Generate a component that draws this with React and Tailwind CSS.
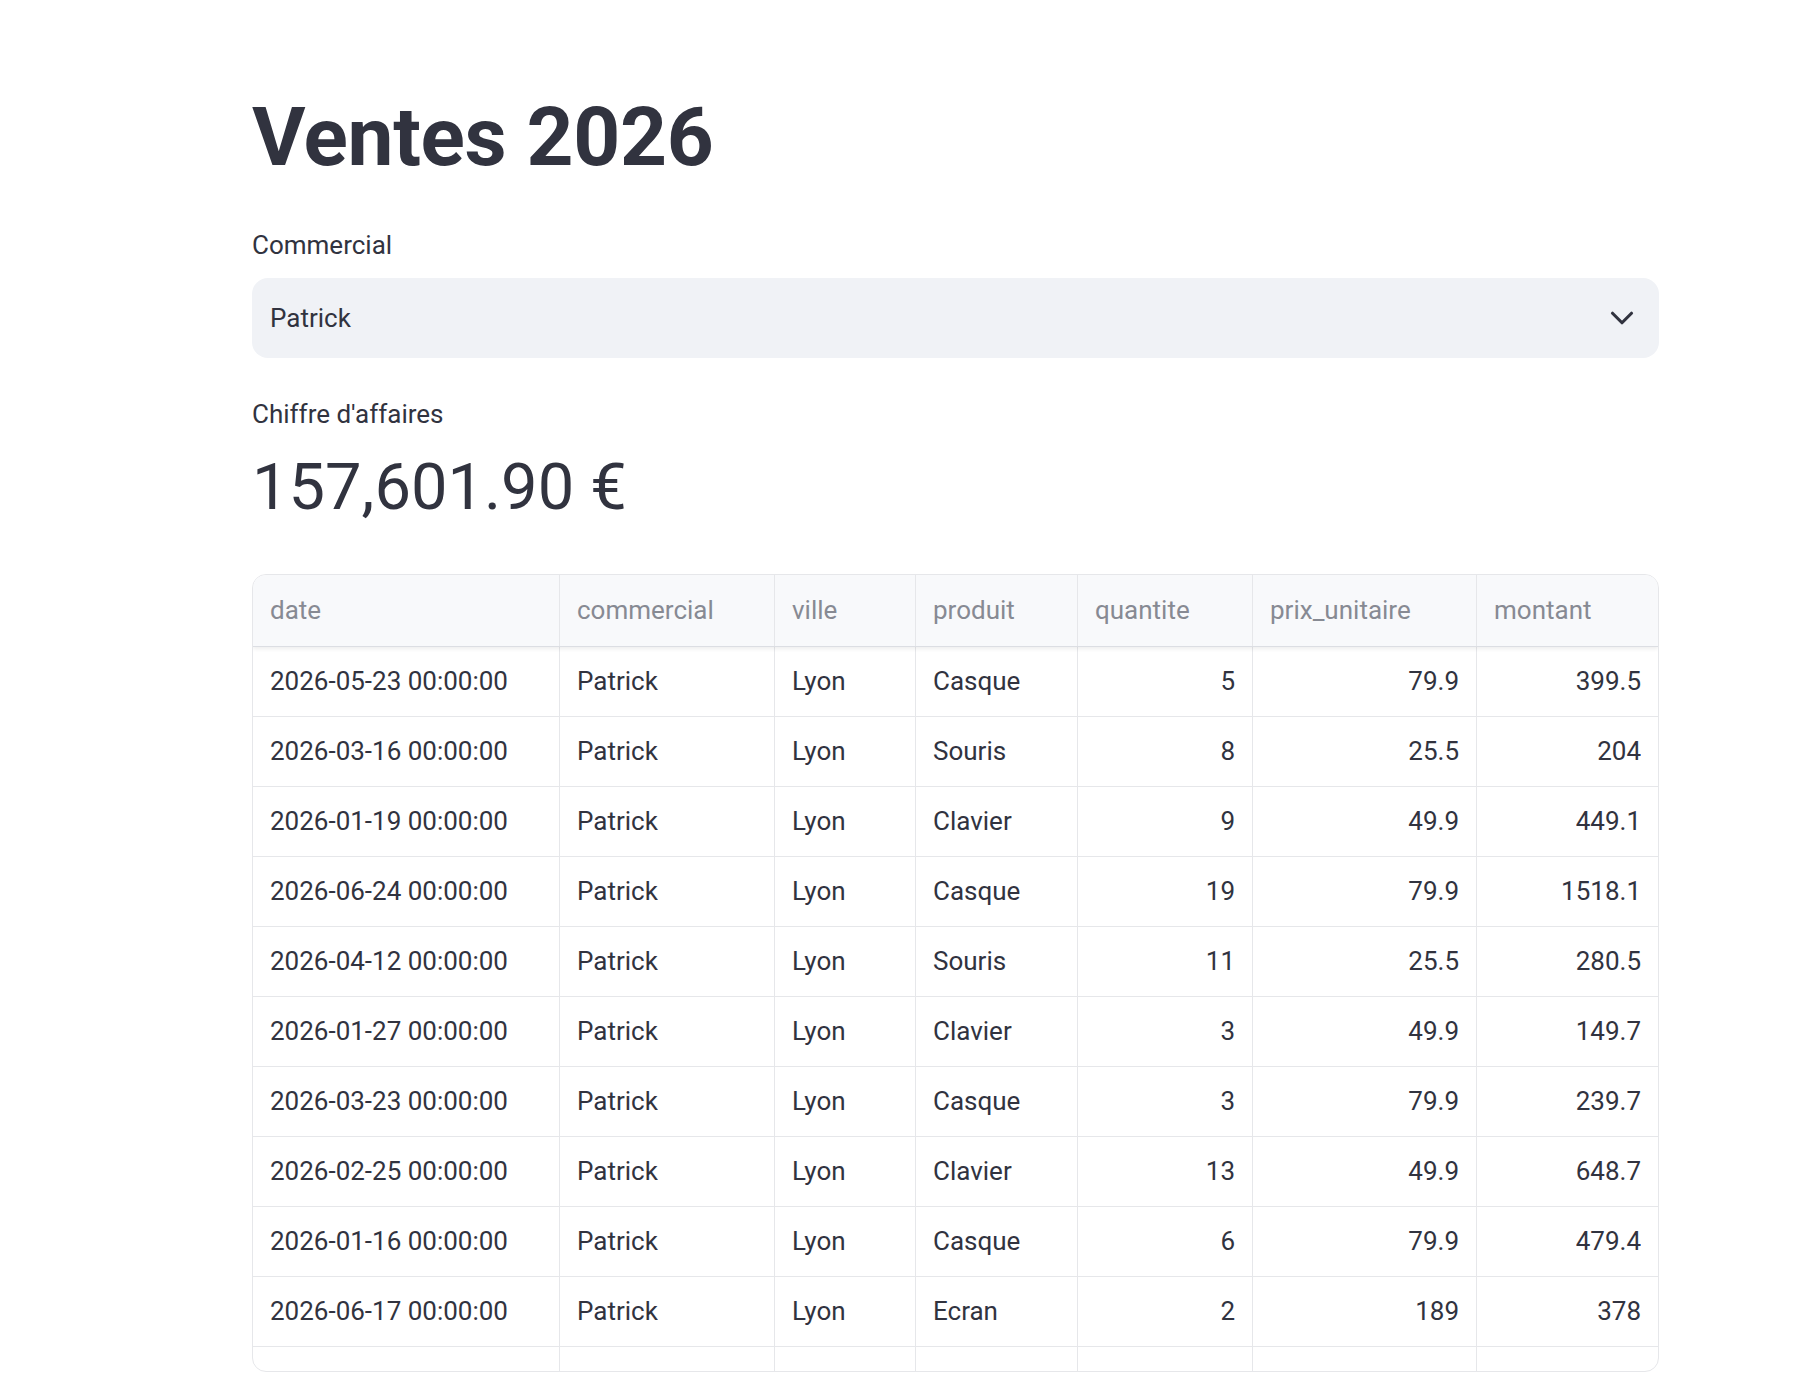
import React from "react";
import { ChevronDown } from "lucide-react";

const columns = [
  { key: "date", label: "date", width: "w-[307px]" },
  { key: "commercial", label: "commercial", width: "w-[215px]" },
  { key: "ville", label: "ville", width: "w-[141px]" },
  { key: "produit", label: "produit", width: "w-[162px]" },
  { key: "quantite", label: "quantite", width: "w-[175px]", num: true },
  { key: "prix", label: "prix_unitaire", width: "w-[224px]", num: true },
  { key: "montant", label: "montant", width: "w-[181px]", num: true },
];

const rows = [
  ["2026-05-23 00:00:00", "Patrick", "Lyon", "Casque", "5", "79.9", "399.5"],
  ["2026-03-16 00:00:00", "Patrick", "Lyon", "Souris", "8", "25.5", "204"],
  ["2026-01-19 00:00:00", "Patrick", "Lyon", "Clavier", "9", "49.9", "449.1"],
  ["2026-06-24 00:00:00", "Patrick", "Lyon", "Casque", "19", "79.9", "1518.1"],
  ["2026-04-12 00:00:00", "Patrick", "Lyon", "Souris", "11", "25.5", "280.5"],
  ["2026-01-27 00:00:00", "Patrick", "Lyon", "Clavier", "3", "49.9", "149.7"],
  ["2026-03-23 00:00:00", "Patrick", "Lyon", "Casque", "3", "79.9", "239.7"],
  ["2026-02-25 00:00:00", "Patrick", "Lyon", "Clavier", "13", "49.9", "648.7"],
  ["2026-01-16 00:00:00", "Patrick", "Lyon", "Casque", "6", "79.9", "479.4"],
  ["2026-06-17 00:00:00", "Patrick", "Lyon", "Ecran", "2", "189", "378"],
  ["", "Patrick", "Lyon", "Ecran", "", "", ""],
];

const Cell = ({ col, last, children, header }) => (
  <div
    className={`${col.width} shrink-0 flex items-center px-[17px] ${
      col.num && !header ? "justify-end" : "justify-start"
    } ${last ? "" : "border-r border-[#e6e7ea]"}`}
  >
    <span className="truncate">{children}</span>
  </div>
);

const App = () => {
  return (
    <div className="min-h-screen bg-white font-['Roboto','Liberation_Sans',sans-serif] text-[#31333f]">
      <div className="ml-[252px] w-[1407px] pt-[96px]">
        <h1 className="text-[82px] leading-none font-bold tracking-[-0.3px]">
          Ventes 2026
        </h1>

        <label className="block mt-[48px] text-[26px] leading-[39px]">
          Commercial
        </label>
        <div className="mt-[13px] h-[80px] rounded-[16px] bg-[#f0f2f6] flex items-center justify-between pl-[18px] pr-[18px]">
          <span className="text-[26px]">Patrick</span>
          <ChevronDown size={38} strokeWidth={2} className="text-[#31333f]" />
        </div>

        <div className="mt-[37px] text-[26px] leading-[39px]">
          Chiffre d'affaires
        </div>
        <div className="mt-[21px] text-[65px] leading-none">157,601.90 €</div>

        {/* data grid, clipped after the tenth row */}
        <div className="mt-[54px] h-[798px] rounded-[14px] border border-[#e6e7ea] overflow-hidden text-[26px]">
          <div className="relative z-10 flex h-[72px] bg-[#f8f9fb] text-[#878a93] border-b border-[#dcdee3] shadow-[0_2px_4px_rgba(0,0,0,0.07)]">
            {columns.map((c, i) => (
              <Cell key={c.key} col={c} last={i === columns.length - 1} header>
                {c.label}
              </Cell>
            ))}
          </div>
          {rows.map((r, ri) => (
            <div key={ri} className="flex h-[70px] border-b border-[#e6e7ea]">
              {columns.map((c, i) => (
                <Cell key={c.key} col={c} last={i === columns.length - 1}>
                  {r[i]}
                </Cell>
              ))}
            </div>
          ))}
        </div>
      </div>
    </div>
  );
};

export default App;
